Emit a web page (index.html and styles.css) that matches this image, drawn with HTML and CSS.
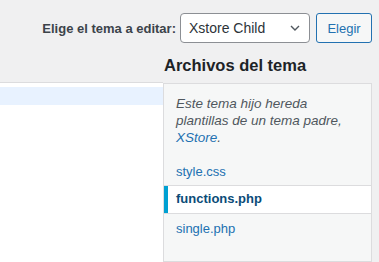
FILE: index.html
```html
<!DOCTYPE html>
<html lang="es">
<head>
    <meta charset="UTF-8">
    <meta name="viewport" content="width=device-width, initial-scale=1.0">
    <title>Editar temas</title>
    <link rel="stylesheet" href="styles.css">
</head>
<body>
    <form class="theme-select">
        <label class="theme-label" for="theme">Elige el tema a editar:</label>
        <div class="select-wrap">
            <select id="theme" class="theme-dropdown">
                <option>Xstore Child</option>
            </select>
            <svg class="chevron" width="10" height="6" viewBox="0 0 10 6"><path d="M1 1l4 4 4-4" fill="none" stroke="#50575e" stroke-width="1.4"/></svg>
        </div>
        <button type="button" class="btn">Elegir</button>
    </form>

    <div class="workspace">
        <div class="editor">
            <div class="line active"></div>
        </div>

        <div class="sidebar">
            <h2>Archivos del tema</h2>
            <div class="file-panel">
                <p class="note">Este tema hijo hereda plantillas de un tema padre, <a href="#">XStore</a>.</p>
                <ul class="files">
                    <li><a href="#">style.css</a></li>
                    <li class="current"><a href="#">functions.php</a></li>
                    <li><a href="#">single.php</a></li>
                </ul>
            </div>
        </div>
    </div>
</body>
</html>
```

FILE: styles.css
```css
body {
    margin: 0;
    background: #f0f0f1;
    font-family: "Liberation Sans", Arial, sans-serif;
    font-size: 13px;
    color: #3c434a;
    overflow: hidden;
}
.theme-select {
    display: flex;
    justify-content: flex-end;
    align-items: center;
    padding: 13px 7px 0 0;
    height: 30px;
}
.theme-label {
    font-weight: bold;
    margin-right: 4px;
    color: #3c434a;
}
.select-wrap {
    position: relative;
    margin-right: 6px;
}
.theme-dropdown {
    -webkit-appearance: none;
    appearance: none;
    width: 130px;
    height: 30px;
    border: 1px solid #8c8f94;
    border-radius: 4px;
    background: #fff;
    font-family: inherit;
    font-size: 14px;
    color: #2c3338;
    padding: 0 24px 0 8px;
}
.chevron {
    position: absolute;
    right: 10px;
    top: 12px;
}
.btn {
    height: 30px;
    width: 56px;
    border: 1px solid #2271b1;
    border-radius: 3px;
    background: #f6f7f7;
    color: #2271b1;
    font-family: inherit;
    font-size: 13px;
    padding: 0;
}
.workspace {
    display: flex;
    margin-top: 14px;
}
.editor {
    flex: 1;
    margin-top: 25px;
    height: 175px;
    background: #fff;
    border-top: 1px solid #dcdcde;
    padding-top: 4px;
}
.line {
    height: 18px;
}
.line.active {
    background: #e8f2ff;
}
.sidebar {
    width: 209px;
    margin-right: 7px;
}
.sidebar h2 {
    margin: 0 0 9px 1px;
    font-size: 16.5px;
    line-height: 17px;
    font-weight: bold;
    color: #1d2327;
}
.file-panel {
    background: #f6f7f7;
    border: 1px solid #dcdcde;
    height: 177px;
}
.note {
    width: 178px;
    margin: 11px 12px 0 12px;
    font-size: 13.5px;
    font-style: italic;
    line-height: 17px;
    color: #50575e;
}
.note a {
    color: #2271b1;
    text-decoration: none;
}
.files {
    list-style: none;
    margin: 13px 0 0;
    padding: 0;
}
.files li a {
    display: block;
    padding: 3px 12px;
    line-height: 20px;
    color: #2271b1;
    text-decoration: none;
}
.files li.current a {
    margin: 0 0 2px;
    padding: 3px 12px 4px;
    background: #fff;
    border-top: 1px solid #dcdcde;
    border-bottom: 1px solid #dcdcde;
    box-shadow: inset 4px 0 0 #00a0d2;
    font-weight: bold;
    color: #0a4b78;
}
```
